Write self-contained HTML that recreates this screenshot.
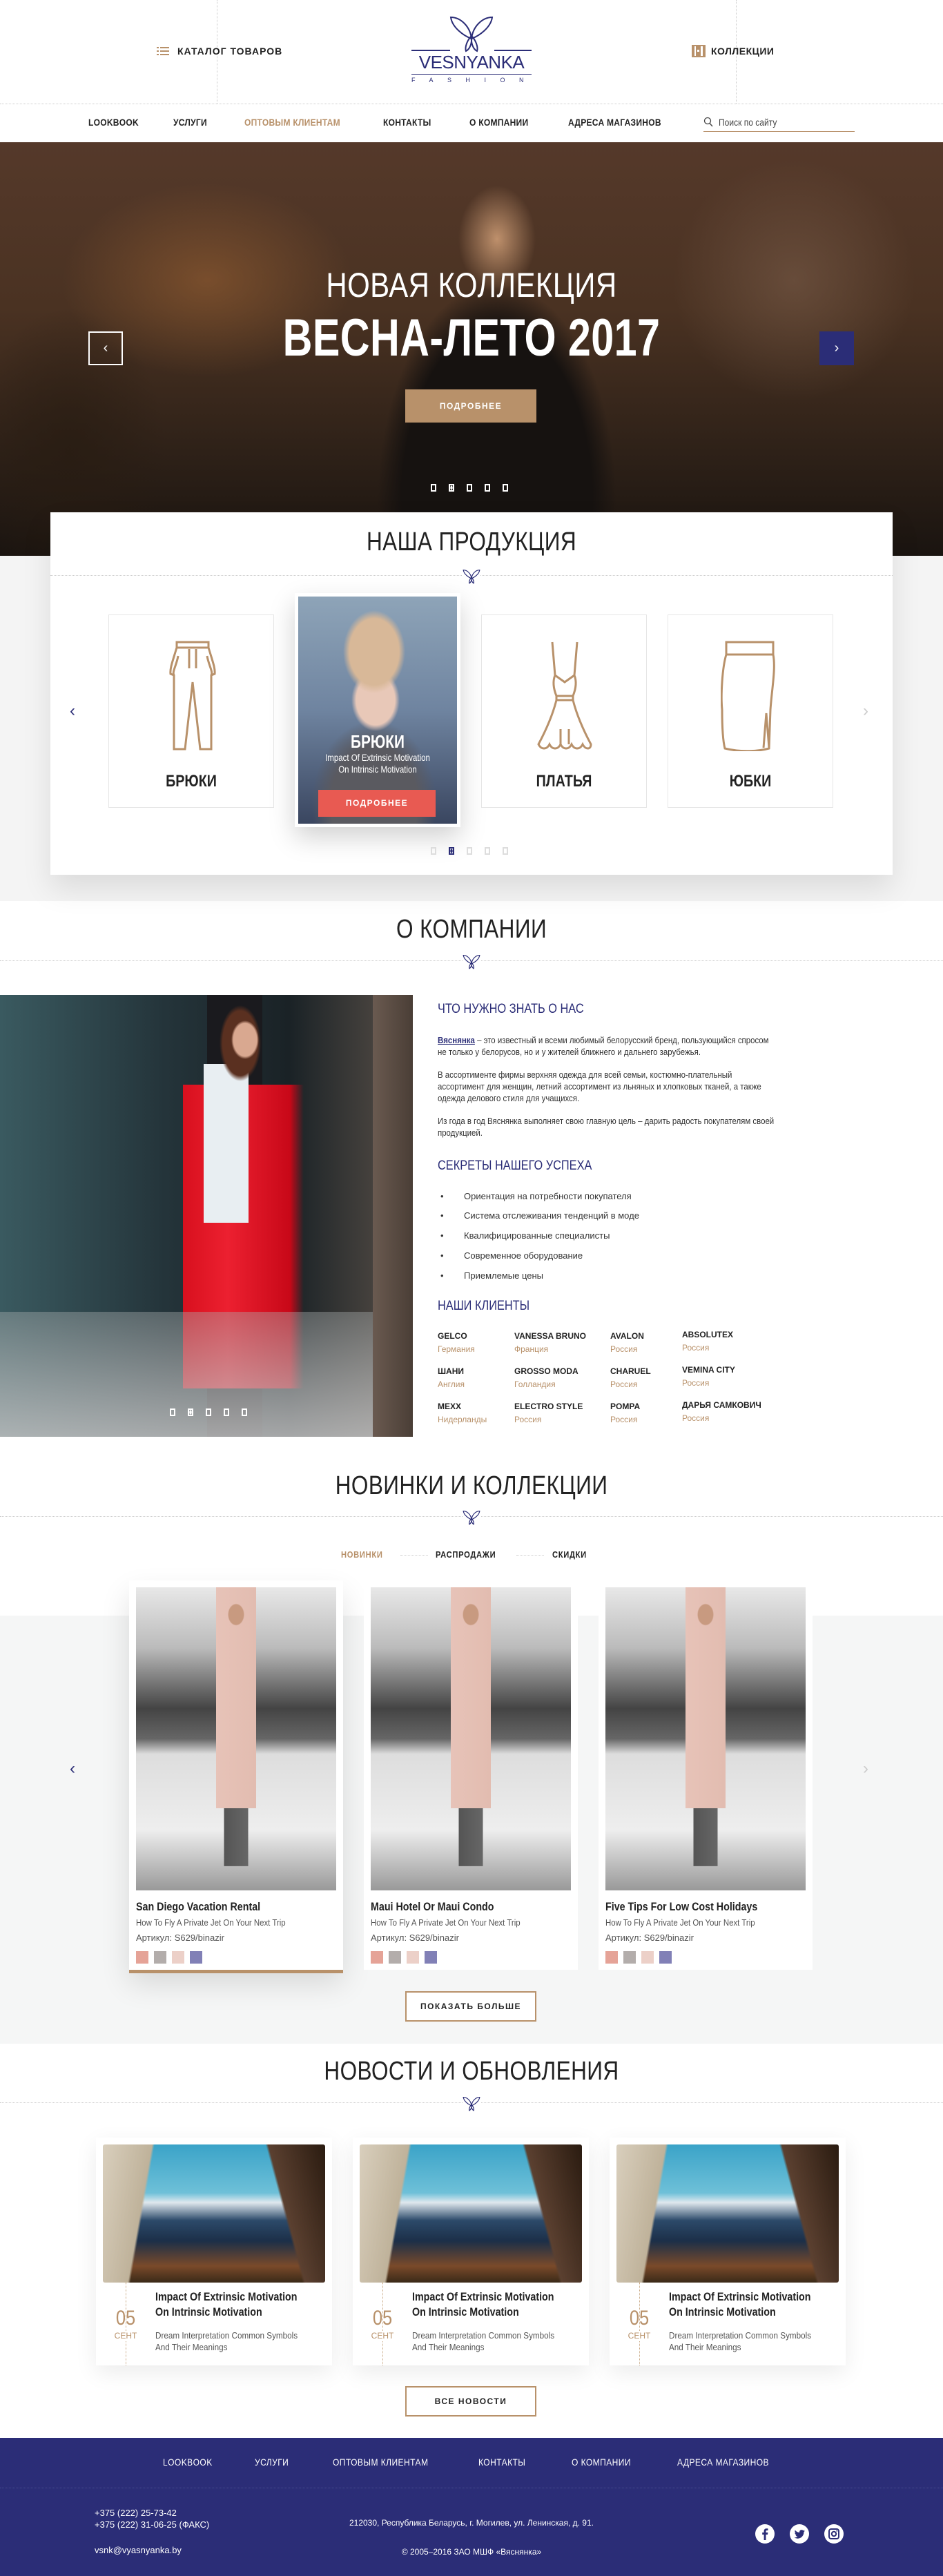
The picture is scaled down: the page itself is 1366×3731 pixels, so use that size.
<!DOCTYPE html>
<html><head><meta charset="utf-8">
<style>
*{margin:0;padding:0;box-sizing:border-box}
body{width:1366px;height:3731px;position:relative;background:#fff;font-family:"Liberation Sans Narrow","Liberation Sans",sans-serif;color:#222;overflow:hidden}
.a{position:absolute}
.c{text-align:center}
.sx{transform:scaleX(.84);transform-origin:center}
.sl{transform:scaleX(.86);transform-origin:left}
.nav{font-size:14px;font-weight:bold;letter-spacing:.3px;color:#222}
.st{position:absolute;left:0;width:1366px;text-align:center;font-size:38px;color:#222;letter-spacing:.5px;transform:scaleX(.83)}
.dl{position:absolute;height:0;border-top:1px dotted #ccc}
.bf{position:absolute;width:26px;height:26px}
.btn{position:absolute;border:2px solid #b8916a;font-size:12px;font-weight:bold;letter-spacing:1.5px;display:flex;align-items:center;justify-content:center;color:#222}
.pc{position:absolute;background:#fff;border:1px solid #e6e6e6}
.pl{position:absolute;left:0;width:100%;text-align:center;font-size:24px;font-weight:bold;color:#222;transform:scaleX(.82)}
.h3{font-size:19px;color:#2b2d77;position:absolute;left:634px;transform:scaleX(.86);transform-origin:left}
.p{font-size:13px;line-height:17px;color:#333;position:absolute;left:634px;width:560px;transform:scaleX(.88);transform-origin:left}
.li{position:absolute;left:638px;font-size:13px;color:#333}
.li span{position:absolute;left:34px;white-space:nowrap}
.cl{position:absolute;font-size:12px;font-weight:bold;color:#222;white-space:nowrap}
.cl i{display:block;font-style:normal;font-weight:normal;color:#b8916a;font-size:12px;margin-top:5px}
.nc{position:absolute;background:#fff;top:2289px;height:564px;width:310px}
.nimg{position:absolute;left:10px;top:10px;width:290px;height:439px;background:
radial-gradient(ellipse 12px 16px at 50% 9%,#c89a80 90%,transparent 100%),
linear-gradient(90deg,transparent 40%,#e7c3b8 40%,#e2bcb0 60%,transparent 60%) 0 0/100% 73% no-repeat,
linear-gradient(90deg,transparent 44%,#555 44%,#666 56%,transparent 56%) 0 0/100% 92% no-repeat,
linear-gradient(180deg,#e8e8e8 0,#bbb 20%,#444 40%,#666 50%,#ddd 55%,#eee 80%,#999 100%)}
.nt{position:absolute;left:10px;top:463px;font-size:17px;font-weight:bold;color:#222;white-space:nowrap;transform:scaleX(.84);transform-origin:left}
.nd{position:absolute;left:10px;top:488px;font-size:13px;color:#555;white-space:nowrap;transform:scaleX(.88);transform-origin:left}
.na{position:absolute;left:10px;top:510px;font-size:13px;color:#555}
.sw{position:absolute;top:537px;width:18px;height:18px}
.bc{position:absolute;top:3096px;width:342px;height:330px;background:#fff;box-shadow:0 10px 30px rgba(0,0,0,.08)}
.bi{position:absolute;left:10px;top:10px;width:322px;height:200px;border-radius:3px;background:
linear-gradient(100deg,#d9cfbd 0,#bfb29a 20%,transparent 21%),
linear-gradient(255deg,#2a1b10 0,#5b4030 22%,transparent 23%),
linear-gradient(180deg,#3aa3c8 0,#6ec0d8 35%,#dfe8ee 42%,#2c4a6a 55%,#1c2f48 70%,#7a4a2a 88%,#3a2a18 100%)}
.bd{position:absolute;left:43px;top:210px;height:120px;border-left:1px dotted #c9a883}
.bn{position:absolute;left:20px;top:245px;width:46px;text-align:center;font-size:30px;color:#b8916a;font-weight:300;transform:scaleX(.85)}
.bm{position:absolute;left:20px;top:280px;width:46px;text-align:center;font-size:12px;color:#b8916a;background:#fff}
.btl{position:absolute;left:86px;top:220px;font-size:17px;font-weight:bold;line-height:22px;color:#222;white-space:nowrap;transform:scaleX(.84);transform-origin:left}
.bds{position:absolute;left:86px;top:278px;font-size:13px;line-height:17px;color:#555;white-space:nowrap;transform:scaleX(.9);transform-origin:left}
.fn{position:absolute;top:3558px;font-size:14px;color:#fff;letter-spacing:.5px}
</style></head><body>

<!-- HEADER -->
<div class="dl" style="left:0;top:150px;width:1366px"></div>
<div class="a" style="left:314px;top:0;height:150px;border-left:1px dotted #ccc"></div>
<div class="a" style="left:1066px;top:0;height:150px;border-left:1px dotted #ccc"></div>
<svg class="a" style="left:227px;top:68px" width="18" height="13"><g fill="#b8916a"><rect x="0" y="0" width="3" height="2"/><rect x="5" y="0" width="13" height="2"/><rect x="0" y="5" width="3" height="2"/><rect x="5" y="5" width="13" height="2"/><rect x="0" y="10" width="3" height="2"/><rect x="5" y="10" width="13" height="2"/></g></svg>
<div class="a nav" style="left:257px;top:66px;letter-spacing:1px">КАТАЛОГ ТОВАРОВ</div>
<svg class="a" style="left:1002px;top:65px" width="20" height="18"><rect x="0" y="0" width="20" height="18" fill="#b8916a"/><rect x="4" y="2" width="2" height="14" fill="#fff"/><rect x="13" y="2" width="3" height="14" fill="#fff"/><rect x="8" y="7" width="3" height="3" fill="#fff"/></svg>
<div class="a nav" style="left:1030px;top:66px;letter-spacing:.5px">КОЛЛЕКЦИИ</div>
<svg class="a" style="left:650px;top:22px" width="66" height="54" viewBox="0 0 66 54"><g fill="none" stroke="#2b2d77" stroke-width="2"><path d="M33 34C22 30 5 18 3 3C17 3 31 16 33 34Z"/><path d="M33 34C44 30 61 18 63 3C49 3 35 16 33 34Z"/><path d="M33 30C27 36 23 46 25 52C31 49 34 40 33 30Z"/><path d="M33 30C39 36 43 46 41 52C35 49 32 40 33 30Z"/></g></svg>
<div class="a" style="left:596px;top:72px;width:56px;border-top:2px solid #2b2d77"></div>
<div class="a" style="left:716px;top:72px;width:54px;border-top:2px solid #2b2d77"></div>
<div class="a" style="left:594px;top:75px;width:178px;text-align:center;font-family:'Liberation Sans',sans-serif;font-size:26px;color:#2b2d77;letter-spacing:-.5px">VESNYANKA</div>
<div class="a" style="left:596px;top:107px;width:174px;border-top:1px solid #2b2d77"></div>
<div class="a" style="left:596px;top:111px;width:180px;font-family:'Liberation Sans',sans-serif;font-size:9px;color:#2b2d77;letter-spacing:20.5px">FASHION</div>

<!-- NAV -->
<div class="a nav sl" style="left:128px;top:169px">LOOKBOOK</div>
<div class="a nav sl" style="left:251px;top:169px">УСЛУГИ</div>
<div class="a nav sl" style="left:354px;top:169px;color:#b8916a">ОПТОВЫМ КЛИЕНТАМ</div>
<div class="a nav sl" style="left:555px;top:169px">КОНТАКТЫ</div>
<div class="a nav sl" style="left:680px;top:169px">О КОМПАНИИ</div>
<div class="a nav sl" style="left:823px;top:169px">АДРЕСА МАГАЗИНОВ</div>
<svg class="a" style="left:1019px;top:169px" width="14" height="15"><circle cx="6" cy="6" r="4.5" fill="none" stroke="#444" stroke-width="1.3"/><path d="M9 9.5L13 14" stroke="#444" stroke-width="1.4"/></svg>
<div class="a sl" style="left:1041px;top:169px;font-size:14px;color:#444">Поиск по сайту</div>
<div class="a" style="left:1019px;top:190px;width:219px;border-top:1px solid #b8916a"></div>

<!-- HERO -->
<div class="a" style="left:0;top:206px;width:1366px;height:599px;background:
radial-gradient(ellipse 80px 110px at 720px 140px,rgba(210,160,120,.85),transparent 70%),
radial-gradient(ellipse 230px 420px at 720px 520px,#161210 60%,transparent 75%),
radial-gradient(ellipse 300px 200px at 300px 200px,rgba(150,95,50,.6),transparent 70%),
radial-gradient(ellipse 250px 250px at 1150px 200px,rgba(130,100,80,.5),transparent 70%),
radial-gradient(ellipse 200px 300px at 100px 450px,rgba(40,28,18,.8),transparent 70%),
linear-gradient(180deg,#55392a 0,#4a3222 40%,#2e2118 75%,#1a1410 100%)"></div>
<div class="a c sx" style="left:0;top:384px;width:1366px;font-size:50px;color:#fff;font-weight:300;letter-spacing:.5px">НОВАЯ КОЛЛЕКЦИЯ</div>
<div class="a c" style="left:0;top:446px;width:1366px;font-size:76px;color:#fff;font-weight:bold;letter-spacing:.5px;transform:scaleX(.78)">ВЕСНА-ЛЕТО 2017</div>
<div class="a c" style="left:587px;top:564px;width:190px;height:48px;background:#b8916a;color:#fff;font-size:12px;font-weight:bold;letter-spacing:1.5px;line-height:48px">ПОДРОБНЕЕ</div>
<div class="a c" style="left:128px;top:480px;width:50px;height:49px;border:2px solid #fff;color:#fff;font-size:20px;line-height:44px">‹</div>
<div class="a c" style="left:1187px;top:480px;width:50px;height:49px;background:#2b2d77;color:#fff;font-size:20px;line-height:48px">›</div>
<div class="a" style="left:624px;top:701px;width:120px;height:11px">
<span class="a" style="left:0;width:8px;height:11px;border:2px solid #fff"></span><span class="a" style="left:26px;width:8px;height:11px;border:2px solid #fff;background:radial-gradient(#fff 1.5px,transparent 2px)"></span><span class="a" style="left:52px;width:8px;height:11px;border:2px solid #fff"></span><span class="a" style="left:78px;width:8px;height:11px;border:2px solid #fff"></span><span class="a" style="left:104px;width:8px;height:11px;border:2px solid #fff"></span></div>

<!-- PRODUCTS -->
<div class="a" style="left:0;top:805px;width:1366px;height:500px;background:#f4f4f4"></div>
<div class="a" style="left:73px;top:742px;width:1220px;height:525px;background:#fff;box-shadow:0 20px 40px rgba(0,0,0,.1)"></div>
<div class="st" style="top:764px">НАША ПРОДУКЦИЯ</div>
<div class="dl" style="left:73px;top:833px;width:1220px"></div>
<svg class="bf" style="left:670px;top:822px;background:#fff" viewBox="0 0 66 54"><g fill="none" stroke="#2b2d77" stroke-width="3"><path d="M33 34C22 30 5 18 3 3C17 3 31 16 33 34Z"/><path d="M33 34C44 30 61 18 63 3C49 3 35 16 33 34Z"/><path d="M33 30C27 36 23 46 25 52C31 49 34 40 33 30Z"/><path d="M33 30C39 36 43 46 41 52C35 49 32 40 33 30Z"/></g></svg>
<div class="a" style="left:101px;top:1016px;color:#2b2d77;font-size:24px">‹</div>
<div class="a" style="left:1250px;top:1016px;color:#ccc;font-size:24px">›</div>

<div class="pc" style="left:157px;top:890px;width:240px;height:280px">
<svg class="a" style="left:86px;top:37px" width="70" height="160" viewBox="0 0 70 160"><g fill="none" stroke="#b8916a" stroke-width="3"><path d="M12 2H58V10H12Z"/><path d="M12 10C6 30 2 40 3 48L8 50L8 157H24L35 60L46 157H62L62 50L67 48C68 40 64 30 58 10"/><path d="M8 50C5 45 12 35 14 22M62 50C65 45 58 35 56 22M30 12V40M40 12V40"/></g></svg>
<div class="pl" style="top:227px">БРЮКИ</div></div>

<div class="a" style="left:427px;top:859px;width:240px;height:339px;background:#fff;box-shadow:0 15px 35px rgba(0,0,0,.18)">
<div class="a" style="left:5px;top:5px;width:230px;height:329px;background:
radial-gradient(ellipse 45px 60px at 110px 80px,#d8b898 80%,transparent 100%),
radial-gradient(ellipse 35px 45px at 112px 150px,#e8c8b8 80%,transparent 100%),
radial-gradient(ellipse 90px 120px at 110px 300px,#5a5a60 70%,transparent 100%),
linear-gradient(180deg,#8ea4b8 0,#6f84a0 50%,#3a4660 100%)"></div>
<div class="a c" style="left:0;top:200px;width:240px;color:#fff;font-size:26px;font-weight:bold;transform:scaleX(.8)">БРЮКИ</div>
<div class="a c" style="left:0;top:230px;width:240px;color:#fff;font-size:14px;line-height:17px;transform:scaleX(.82)">Impact Of Extrinsic Motivation<br>On Intrinsic Motivation</div>
<div class="a c" style="left:34px;top:285px;width:170px;height:39px;background:#e85a52;color:#fff;font-size:12px;font-weight:bold;letter-spacing:1.5px;line-height:39px">ПОДРОБНЕЕ</div>
</div>

<div class="pc" style="left:697px;top:890px;width:240px;height:280px">
<svg class="a" style="left:80px;top:37px" width="80" height="160" viewBox="0 0 80 160"><g fill="none" stroke="#b8916a" stroke-width="3"><path d="M22 2L26 50L40 60L54 50L58 2"/><path d="M26 50C22 60 24 70 28 80L52 80C56 70 58 60 54 50"/><path d="M28 80H52V86H28Z"/><path d="M28 86C22 110 10 135 2 150C6 158 14 158 18 150C22 158 30 158 34 150C38 158 46 158 50 150C54 158 62 158 66 150C70 158 78 158 78 150C70 135 58 110 52 86"/><path d="M34 128V150M46 128V150"/></g></svg>
<div class="pl" style="top:227px">ПЛАТЬЯ</div></div>

<div class="pc" style="left:967px;top:890px;width:240px;height:280px">
<svg class="a" style="left:76px;top:37px" width="90" height="160" viewBox="0 0 90 160"><g fill="none" stroke="#b8916a" stroke-width="3"><path d="M8 2H76V20H8Z"/><path d="M8 20C2 40 0 80 2 100C2 130 4 148 6 156C30 162 56 160 70 156L72 100C74 70 80 40 76 20"/><path d="M62 155L66 105L70 155"/></g></svg>
<div class="pl" style="top:227px">ЮБКИ</div></div>

<div class="a" style="left:624px;top:1227px;width:120px;height:11px">
<span class="a" style="left:0;width:8px;height:11px;border:2px solid #ddd"></span><span class="a" style="left:26px;width:8px;height:11px;border:2px solid #2b2d77;background:radial-gradient(#2b2d77 1.5px,transparent 2px)"></span><span class="a" style="left:52px;width:8px;height:11px;border:2px solid #ddd"></span><span class="a" style="left:78px;width:8px;height:11px;border:2px solid #ddd"></span><span class="a" style="left:104px;width:8px;height:11px;border:2px solid #ddd"></span></div>

<!-- ABOUT -->
<div class="st" style="top:1325px">О КОМПАНИИ</div>
<div class="dl" style="left:0;top:1391px;width:1366px"></div>
<svg class="bf" style="left:670px;top:1380px;background:#fff" viewBox="0 0 66 54"><g fill="none" stroke="#2b2d77" stroke-width="3"><path d="M33 34C22 30 5 18 3 3C17 3 31 16 33 34Z"/><path d="M33 34C44 30 61 18 63 3C49 3 35 16 33 34Z"/><path d="M33 30C27 36 23 46 25 52C31 49 34 40 33 30Z"/><path d="M33 30C39 36 43 46 41 52C35 49 32 40 33 30Z"/></g></svg>
<div class="a" style="left:0;top:1441px;width:598px;height:640px;background:
radial-gradient(ellipse 20px 28px at 355px 65px,#d9a890 85%,transparent 100%),
radial-gradient(ellipse 30px 55px at 348px 70px,#5a3020 85%,transparent 100%),
linear-gradient(90deg,transparent 295px,#e8eef2 295px,#e8eef2 360px,transparent 360px) 0 100px/100% 230px no-repeat,
linear-gradient(90deg,transparent 265px,#d8101e 265px,#ec2030 330px,#c80818 420px,transparent 440px) 0 130px/100% 440px no-repeat,
linear-gradient(90deg,transparent 300px,#1a1a1e 300px,#1a1a1e 380px,transparent 380px) 0 0/100% 640px no-repeat,
linear-gradient(90deg,#3a5a60 0,#24343a 40%,#1a2226 70%,#5a5048 100%)"></div>
<div class="a" style="left:540px;top:1441px;width:58px;height:640px;background:linear-gradient(90deg,#6a5a50,#4a3e36)"></div>
<div class="a" style="left:0;top:1900px;width:540px;height:181px;background:linear-gradient(180deg,rgba(170,175,175,.4),rgba(200,200,200,.8))"></div>
<div class="a" style="left:246px;top:2040px;width:120px;height:11px">
<span class="a" style="left:0;width:8px;height:11px;border:2px solid #fff"></span><span class="a" style="left:26px;width:8px;height:11px;border:2px solid #fff;background:radial-gradient(#fff 1.5px,transparent 2px)"></span><span class="a" style="left:52px;width:8px;height:11px;border:2px solid #fff"></span><span class="a" style="left:78px;width:8px;height:11px;border:2px solid #fff"></span><span class="a" style="left:104px;width:8px;height:11px;border:2px solid #fff"></span></div>

<div class="h3" style="top:1451px">ЧТО НУЖНО ЗНАТЬ О НАС</div>
<div class="p" style="top:1498px"><b style="color:#2b2d77;text-decoration:underline">Вяснянка</b> – это известный и всеми любимый белорусский бренд, пользующийся спросом не только у белорусов, но и у жителей ближнего и дальнего зарубежья.</div>
<div class="p" style="top:1548px">В ассортименте фирмы верхняя одежда для всей семьи, костюмно-плательный ассортимент для женщин, летний ассортимент из льняных и хлопковых тканей, а также одежда делового стиля для учащихся.</div>
<div class="p" style="top:1615px">Из года в год Вяснянка выполняет свою главную цель – дарить радость покупателям своей продукцией.</div>
<div class="h3" style="top:1678px">СЕКРЕТЫ НАШЕГО УСПЕХА</div>
<div class="li" style="top:1725px">•<span>Ориентация на потребности покупателя</span></div>
<div class="li" style="top:1753px">•<span>Система отслеживания тенденций в моде</span></div>
<div class="li" style="top:1782px">•<span>Квалифицированные специалисты</span></div>
<div class="li" style="top:1811px">•<span>Современное оборудование</span></div>
<div class="li" style="top:1840px">•<span>Приемлемые цены</span></div>
<div class="h3" style="top:1881px">НАШИ КЛИЕНТЫ</div>
<div class="cl" style="left:634px;top:1928px">GELCO<i>Германия</i></div>
<div class="cl" style="left:745px;top:1928px">VANESSA BRUNO<i>Франция</i></div>
<div class="cl" style="left:884px;top:1928px">AVALON<i>Россия</i></div>
<div class="cl" style="left:988px;top:1926px">ABSOLUTEX<i>Россия</i></div>
<div class="cl" style="left:634px;top:1979px">ШАНИ<i>Англия</i></div>
<div class="cl" style="left:745px;top:1979px">GROSSO MODA<i>Голландия</i></div>
<div class="cl" style="left:884px;top:1979px">CHARUEL<i>Россия</i></div>
<div class="cl" style="left:988px;top:1977px">VEMINA CITY<i>Россия</i></div>
<div class="cl" style="left:634px;top:2030px">MEXX<i>Нидерланды</i></div>
<div class="cl" style="left:745px;top:2030px">ELECTRO STYLE<i>Россия</i></div>
<div class="cl" style="left:884px;top:2030px">POMPA<i>Россия</i></div>
<div class="cl" style="left:988px;top:2028px">ДАРЬЯ САМКОВИЧ<i>Россия</i></div>

<!-- NEW -->
<div class="st" style="top:2131px">НОВИНКИ И КОЛЛЕКЦИИ</div>
<div class="dl" style="left:0;top:2196px;width:1366px"></div>
<svg class="bf" style="left:670px;top:2185px;background:#fff" viewBox="0 0 66 54"><g fill="none" stroke="#2b2d77" stroke-width="3"><path d="M33 34C22 30 5 18 3 3C17 3 31 16 33 34Z"/><path d="M33 34C44 30 61 18 63 3C49 3 35 16 33 34Z"/><path d="M33 30C27 36 23 46 25 52C31 49 34 40 33 30Z"/><path d="M33 30C39 36 43 46 41 52C35 49 32 40 33 30Z"/></g></svg>
<div class="a nav sl" style="left:494px;top:2244px;color:#b8916a;font-size:13px;letter-spacing:.8px">НОВИНКИ</div>
<div class="a" style="left:580px;top:2252px;width:40px;border-top:1px dotted #ccc"></div>
<div class="a nav sl" style="left:631px;top:2244px;font-size:13px;letter-spacing:.8px">РАСПРОДАЖИ</div>
<div class="a" style="left:748px;top:2252px;width:40px;border-top:1px dotted #ccc"></div>
<div class="a nav sl" style="left:800px;top:2244px;font-size:13px;letter-spacing:.8px">СКИДКИ</div>
<div class="a" style="left:0;top:2340px;width:1366px;height:620px;background:#f5f6f6"></div>
<div class="a" style="left:101px;top:2548px;color:#2b2d77;font-size:24px">‹</div>
<div class="a" style="left:1250px;top:2548px;color:#ccc;font-size:24px">›</div>

<div class="nc" style="left:187px;box-shadow:0 20px 40px rgba(0,0,0,.12)"><div class="nimg"></div>
<div class="nt">San Diego Vacation Rental</div><div class="nd">How To Fly A Private Jet On Your Next Trip</div><div class="na">Артикул: S629/binazir</div>
<div class="sw" style="left:10px;background:#e5a397"></div><div class="sw" style="left:36px;background:#b3adab"></div><div class="sw" style="left:62px;background:#ecd0c8"></div><div class="sw" style="left:88px;background:#8180b6"></div>
<div class="a" style="left:0;top:564px;width:310px;height:5px;background:#b8916a"></div></div>
<div class="nc" style="left:527px"><div class="nimg"></div>
<div class="nt">Maui Hotel Or Maui Condo</div><div class="nd">How To Fly A Private Jet On Your Next Trip</div><div class="na">Артикул: S629/binazir</div>
<div class="sw" style="left:10px;background:#e5a397"></div><div class="sw" style="left:36px;background:#b3adab"></div><div class="sw" style="left:62px;background:#ecd0c8"></div><div class="sw" style="left:88px;background:#8180b6"></div></div>
<div class="nc" style="left:867px"><div class="nimg"></div>
<div class="nt">Five Tips For Low Cost Holidays</div><div class="nd">How To Fly A Private Jet On Your Next Trip</div><div class="na">Артикул: S629/binazir</div>
<div class="sw" style="left:10px;background:#e5a397"></div><div class="sw" style="left:36px;background:#b3adab"></div><div class="sw" style="left:62px;background:#ecd0c8"></div><div class="sw" style="left:88px;background:#8180b6"></div></div>
<div class="btn" style="left:587px;top:2884px;width:190px;height:44px;background:#fff">ПОКАЗАТЬ БОЛЬШЕ</div>

<!-- NEWS -->
<div class="st" style="top:2979px">НОВОСТИ И ОБНОВЛЕНИЯ</div>
<div class="dl" style="left:0;top:3045px;width:1366px"></div>
<svg class="bf" style="left:670px;top:3034px;background:#fff" viewBox="0 0 66 54"><g fill="none" stroke="#2b2d77" stroke-width="3"><path d="M33 34C22 30 5 18 3 3C17 3 31 16 33 34Z"/><path d="M33 34C44 30 61 18 63 3C49 3 35 16 33 34Z"/><path d="M33 30C27 36 23 46 25 52C31 49 34 40 33 30Z"/><path d="M33 30C39 36 43 46 41 52C35 49 32 40 33 30Z"/></g></svg>
<div class="bc" style="left:139px"><div class="bi"></div><div class="bd"></div><div class="bn">05</div><div class="bm">СЕНТ</div><div class="btl">Impact Of Extrinsic Motivation<br>On Intrinsic Motivation</div><div class="bds">Dream Interpretation Common Symbols<br>And Their Meanings</div></div>
<div class="bc" style="left:511px"><div class="bi"></div><div class="bd"></div><div class="bn">05</div><div class="bm">СЕНТ</div><div class="btl">Impact Of Extrinsic Motivation<br>On Intrinsic Motivation</div><div class="bds">Dream Interpretation Common Symbols<br>And Their Meanings</div></div>
<div class="bc" style="left:883px"><div class="bi"></div><div class="bd"></div><div class="bn">05</div><div class="bm">СЕНТ</div><div class="btl">Impact Of Extrinsic Motivation<br>On Intrinsic Motivation</div><div class="bds">Dream Interpretation Common Symbols<br>And Their Meanings</div></div>
<div class="btn" style="left:587px;top:3456px;width:190px;height:44px">ВСЕ НОВОСТИ</div>

<!-- FOOTER -->
<div class="a" style="left:0;top:3531px;width:1366px;height:200px;background:#2b2d77"></div>
<div class="fn sl" style="left:236px">LOOKBOOK</div>
<div class="fn sl" style="left:369px">УСЛУГИ</div>
<div class="fn sl" style="left:482px">ОПТОВЫМ КЛИЕНТАМ</div>
<div class="fn sl" style="left:693px">КОНТАКТЫ</div>
<div class="fn sl" style="left:828px">О КОМПАНИИ</div>
<div class="fn sl" style="left:981px">АДРЕСА МАГАЗИНОВ</div>
<div class="a" style="left:0;top:3603px;width:1366px;border-top:1px dotted #4a4c90"></div>
<div class="a" style="left:137px;top:3631px;color:#fff;font-size:13px;line-height:17px">+375 (222) 25-73-42<br>+375 (222) 31-06-25 (ФАКС)</div>
<div class="a" style="left:137px;top:3686px;color:#fff;font-size:13px">vsnk@vyasnyanka.by</div>
<div class="a c" style="left:383px;top:3647px;width:600px;color:#fff;font-size:12px">212030, Республика Беларусь, г. Могилев, ул. Ленинская, д. 91.</div>
<div class="a c" style="left:383px;top:3689px;width:600px;color:#fff;font-size:12px">© 2005–2016 ЗАО МШФ «Вяснянка»</div>
<svg class="a" style="left:1093px;top:3655px" width="132" height="30"><g fill="#fff"><circle cx="15" cy="15" r="14"/><circle cx="65" cy="15" r="14"/><circle cx="115" cy="15" r="14"/></g>
<path d="M16.5 24V16H19L19.4 13H16.5V11.3C16.5 10.5 16.8 10 18 10H19.5V7.3C19.2 7.3 18.3 7.2 17.3 7.2C15.1 7.2 13.6 8.5 13.6 11V13H11.2V16H13.6V24Z" fill="#2b2d77"/>
<path d="M73 10.5C72.4 10.8 71.8 10.9 71.2 11C71.8 10.6 72.3 10 72.5 9.3C71.9 9.7 71.2 9.9 70.5 10.1C69.9 9.5 69.1 9.1 68.2 9.1C66.5 9.1 65.1 10.5 65.1 12.2C65.1 12.5 65.1 12.7 65.2 12.9C62.6 12.8 60.3 11.5 58.8 9.6C58.5 10.1 58.4 10.6 58.4 11.2C58.4 12.3 58.9 13.2 59.8 13.8C59.3 13.8 58.8 13.6 58.4 13.4C58.4 14.9 59.5 16.2 60.9 16.5C60.3 16.7 59.9 16.7 59.5 16.6C59.9 17.8 61.1 18.7 62.4 18.7C61 19.8 59.3 20.5 57.5 20.3C58.9 21.2 60.6 21.7 62.3 21.7C68.2 21.7 71.4 16.8 71.4 12.6V12.2C72 11.7 72.6 11.2 73 10.5Z" fill="#2b2d77"/>
<rect x="108" y="8" width="14" height="14" rx="3" fill="none" stroke="#2b2d77" stroke-width="2"/><circle cx="115" cy="15" r="3.2" fill="none" stroke="#2b2d77" stroke-width="2"/><circle cx="119.3" cy="10.8" r="1" fill="#2b2d77"/></svg>
</body></html>
